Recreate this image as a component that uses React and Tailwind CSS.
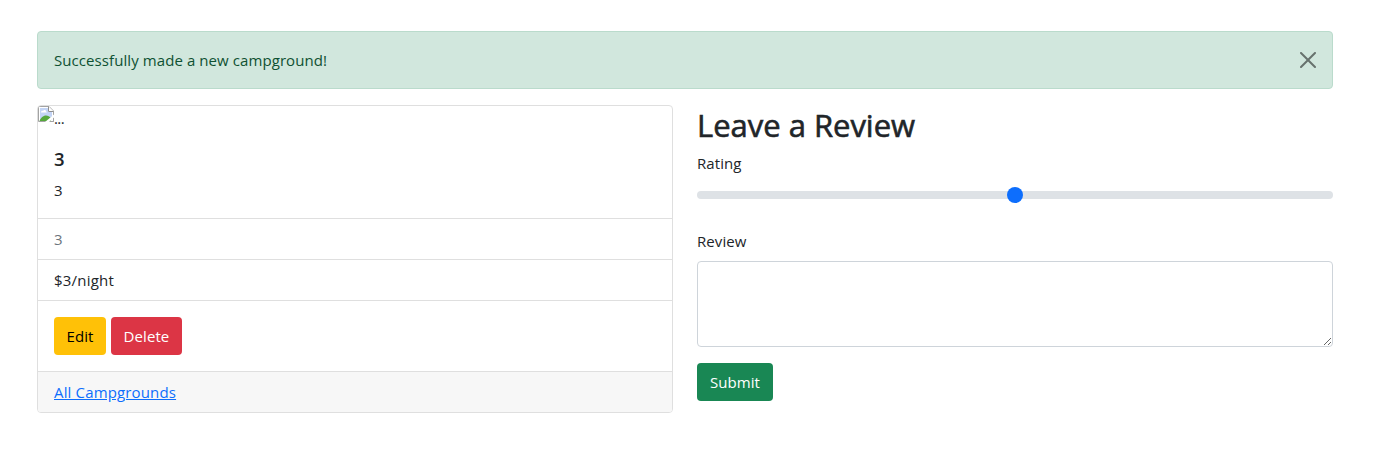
import React from "react";

function BrokenImage() {
  return (
    <svg width="16" height="16" viewBox="0 0 16 16" className="shrink-0" aria-hidden="true">
      <path d="M.5 .5H11L15.5 5V15.5H.5Z" fill="#fff" stroke="#a3a3a3" />
      <path d="M2 2H10V6H14V14H2Z" fill="#c3d4f5" />
      <path d="M3 6.5C3 5 4.2 4.6 5 5C5.6 3.6 8 3.8 8 5.5C9 5.5 9 6.5 8.5 6.5Z" fill="#fff" />
      <path d="M1.5 15C3 11 6 9.5 8 9.5C10 9.5 11.5 10.5 13 12V15Z" fill="#56a83c" />
      <path d="M10.5 .5V5.5H15.5" fill="#fff" stroke="#8e8e8e" />
      <path d="M16 8.5L7 16H11L16 11.5Z" fill="#fff" />
      <path d="M12 15.5H15.5V12.5" fill="none" stroke="#a3a3a3" />
    </svg>
  );
}

function Alert() {
  return (
    <div className="mb-4 flex h-[58px] items-center justify-between rounded border border-[#badbcc] bg-[#d1e7dd] px-4 text-[#0f5132]">
      <span>Successfully made a new campground!</span>
      <button aria-label="Close" className="opacity-50">
        <svg width="16" height="16" viewBox="0 0 16 16" fill="#000">
          <path d="M.293.293a1 1 0 011.414 0L8 6.586 14.293.293a1 1 0 111.414 1.414L9.414 8l6.293 6.293a1 1 0 01-1.414 1.414L8 9.414l-6.293 6.293a1 1 0 01-1.414-1.414L6.586 8 .293 1.707a1 1 0 010-1.414z" />
        </svg>
      </button>
    </div>
  );
}

function CampgroundCard() {
  return (
    <div className="flex flex-col overflow-hidden rounded border border-[#dfdfdf] bg-white">
      <div className="flex h-6">
        <BrokenImage />
        <span className="tracking-[-0.6px]">...</span>
      </div>
      <div className="p-4">
        <h5 className="mb-2 pt-px text-[18.5px] leading-[23px] font-semibold">3</h5>
        <p>3</p>
      </div>
      <ul className="border-t border-[#dfdfdf]">
        <li className="border-b border-[#dfdfdf] px-4 py-2 text-[#6c757d]">3</li>
        <li className="border-b border-[#dfdfdf] px-4 py-2 tracking-[0.2px]">$3/night</li>
      </ul>
      <div className="flex gap-[5px] p-4">
        <button className="h-[38px] w-[52px] rounded bg-[#ffc107] text-black">Edit</button>
        <button className="h-[38px] w-[71px] rounded bg-[#dc3545] text-white">Delete</button>
      </div>
      <div className="border-t border-[#dfdfdf] bg-[#f7f7f7] px-4 py-2">
        <a href="#" className="tracking-[0.15px] text-[#0d6efd] underline">All Campgrounds</a>
      </div>
    </div>
  );
}

function ReviewForm() {
  return (
    <form>
      <h2 className="mb-[7px] pt-px text-[31px] leading-[38.4px] font-medium tracking-[-0.02px] [-webkit-text-stroke:0.6px_#212529]">Leave a Review</h2>
      <label htmlFor="rating" className="mb-2 block">Rating</label>
      <input
        id="rating"
        type="range"
        min="1"
        max="5"
        defaultValue="3"
        className="mb-[22px] block h-6 w-full appearance-none bg-transparent [&::-webkit-slider-runnable-track]:h-2 [&::-webkit-slider-runnable-track]:rounded-full [&::-webkit-slider-runnable-track]:bg-[#dee2e6] [&::-webkit-slider-thumb]:-mt-1 [&::-webkit-slider-thumb]:size-4 [&::-webkit-slider-thumb]:appearance-none [&::-webkit-slider-thumb]:rounded-full [&::-webkit-slider-thumb]:bg-[#0d6efd]"
      />
      <label htmlFor="review" className="mb-2 block">Review</label>
      <textarea id="review" className="mb-4 block h-[86px] w-full resize-y rounded border border-[#ced4da] bg-white px-3 py-1.5" />
      <button type="button" className="h-[38px] w-[76px] rounded bg-[#198754] text-white">Submit</button>
    </form>
  );
}

export default function App() {
  return (
    <main className="h-[461px] bg-white pt-[31px] pr-[66px] pl-[37px] font-['Open_Sans','Noto_Sans',sans-serif] text-[15px] leading-6 tracking-[0.08px] text-[#212529]">
      <Alert />
      <div className="grid grid-cols-2 items-start gap-6">
        <CampgroundCard />
        <ReviewForm />
      </div>
    </main>
  );
}
